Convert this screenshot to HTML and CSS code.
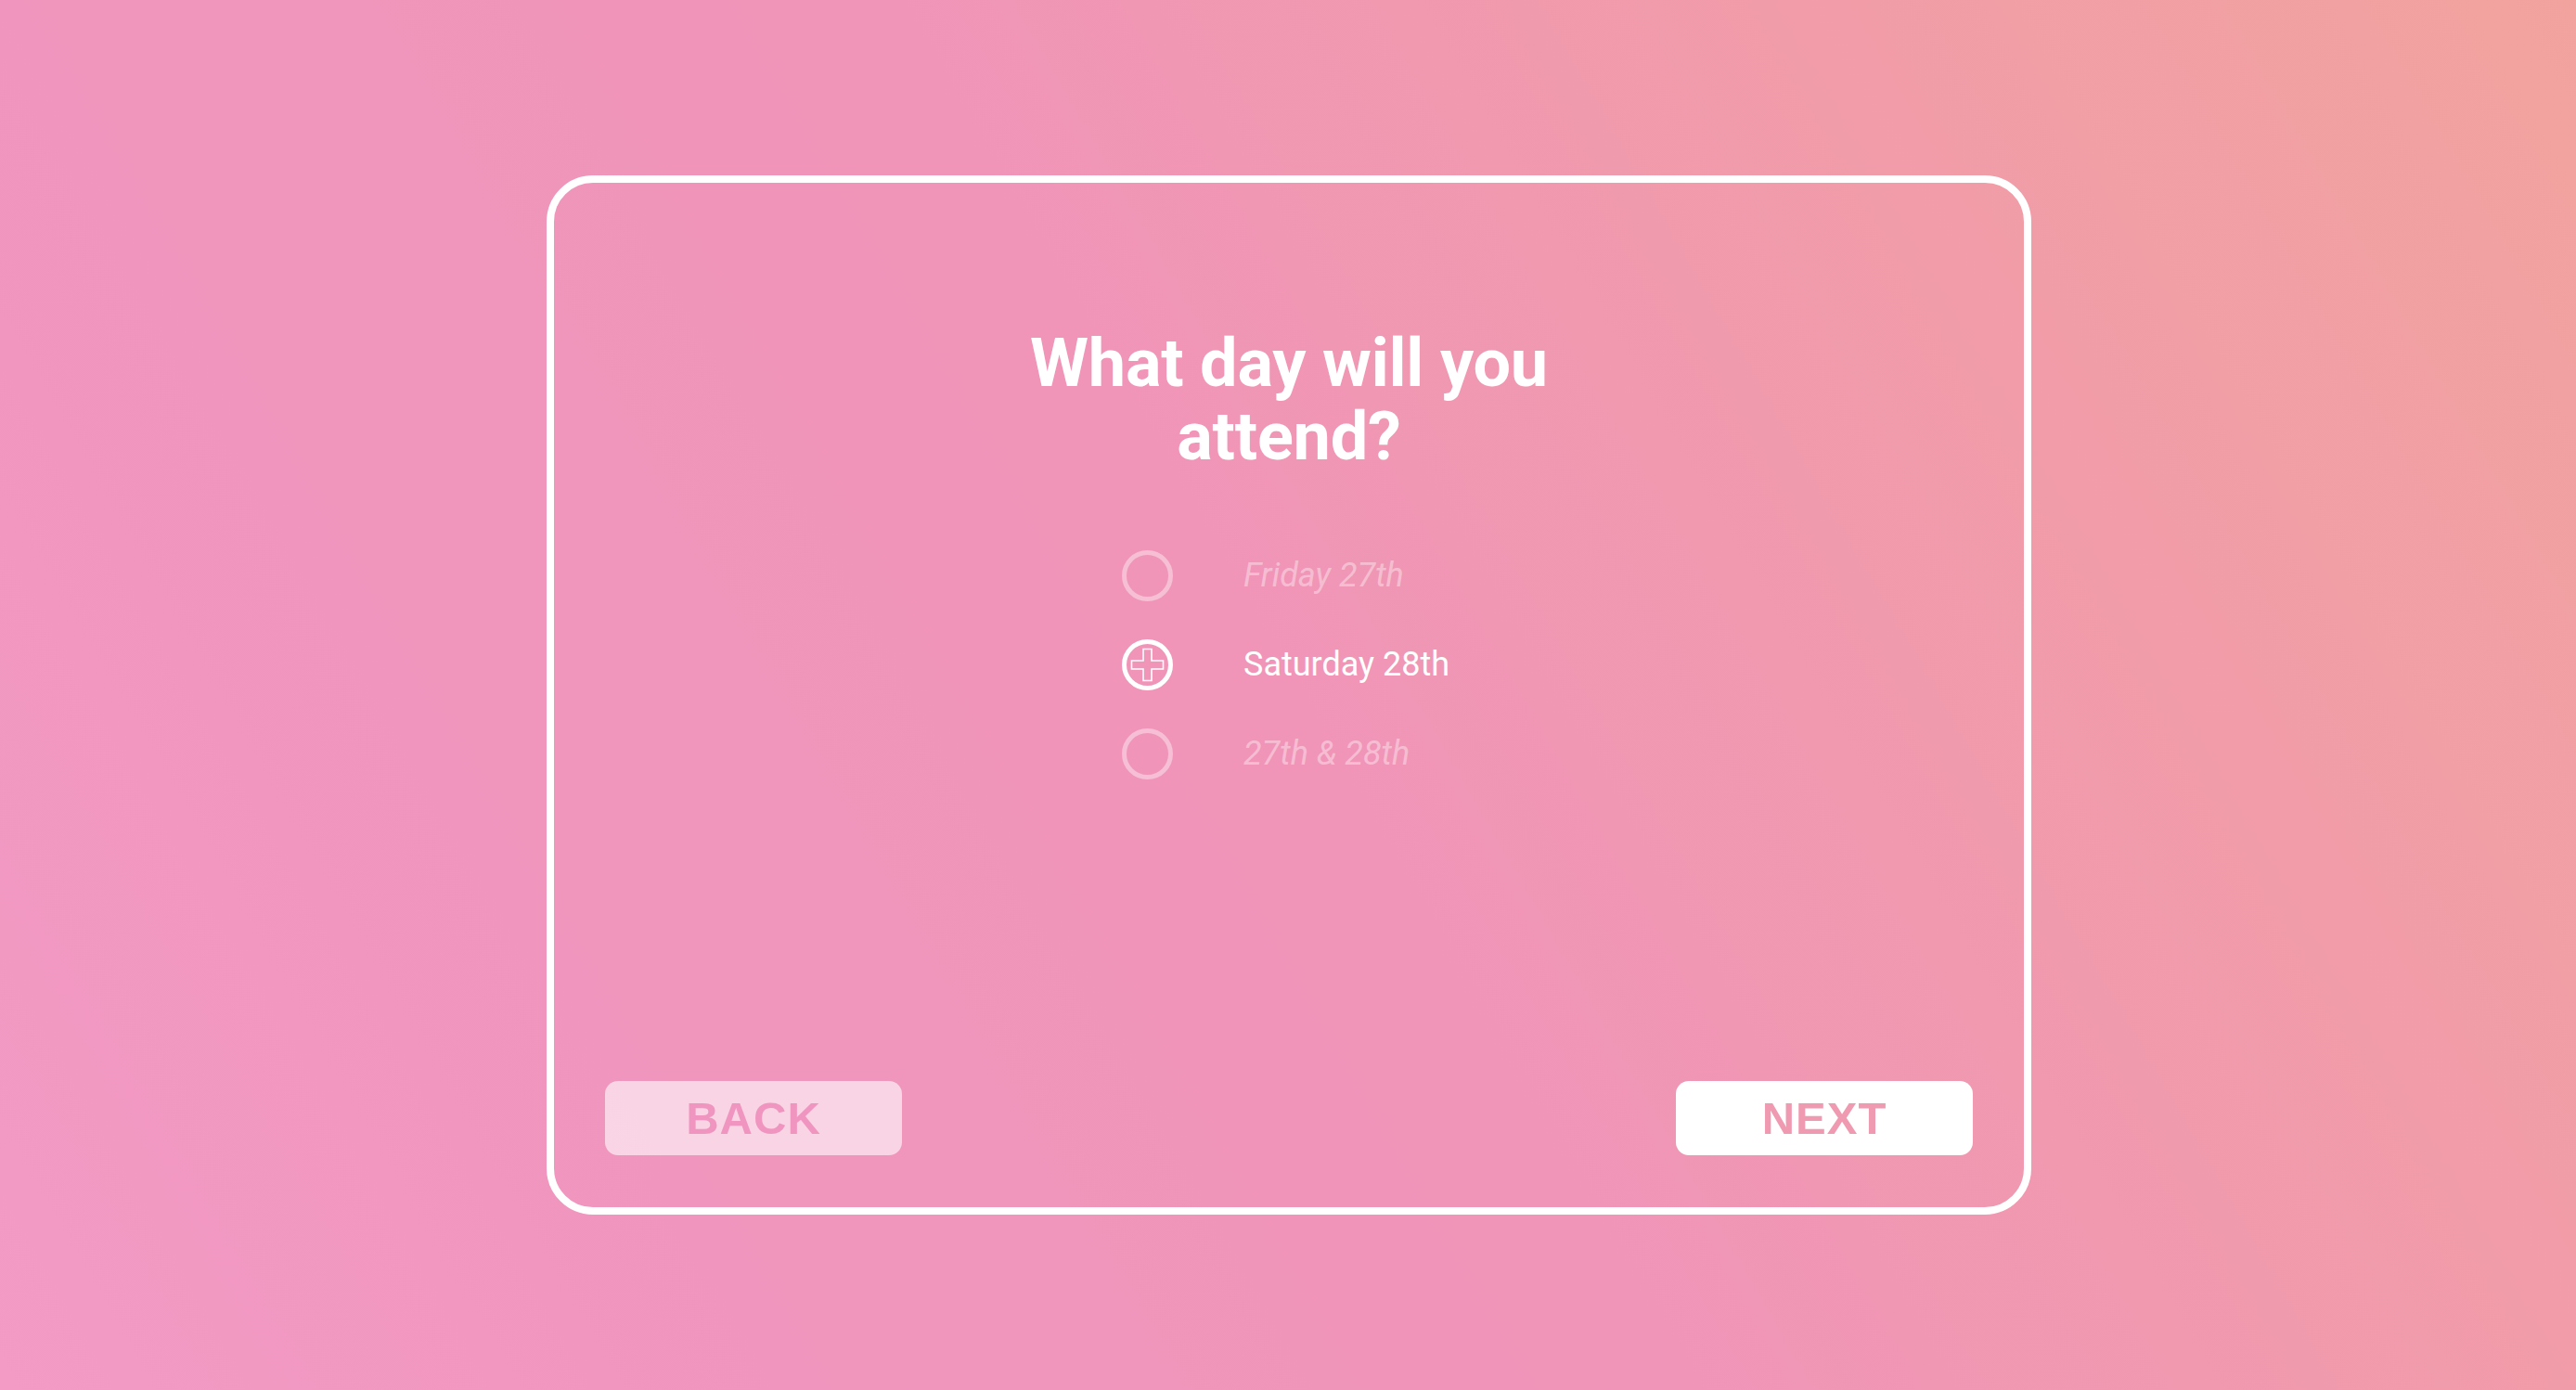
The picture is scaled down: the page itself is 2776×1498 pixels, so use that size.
FILE: index.html
```html
<!DOCTYPE html>
<html lang="en">
<head>
<meta charset="utf-8">
<title>What day will you attend?</title>
<link rel="stylesheet" href="styles.css">
</head>
<body>
<main class="card">
  <h1 class="title">What day will you attend?</h1>
  <ul class="options">
    <li class="option option--muted">
      <span class="radio"></span>
      <span class="label">Friday 27th</span>
    </li>
    <li class="option option--selected">
      <svg class="radio-icon" viewBox="0 0 55 55" width="55" height="55" aria-hidden="true">
        <circle cx="27.5" cy="27.5" r="25" fill="none" stroke="#ffffff" stroke-width="5"/>
        <path d="M23 10.5 H32 V23 H44.5 V32 H32 V44.5 H23 V32 H10.5 V23 H23 Z" fill="none" stroke="#ffffff" stroke-width="1.6" stroke-linejoin="miter"/>
      </svg>
      <span class="label">Saturday 28th</span>
    </li>
    <li class="option option--muted">
      <span class="radio"></span>
      <span class="label">27th &amp; 28th</span>
    </li>
  </ul>
  <div class="actions">
    <button class="btn btn--back" type="button">BACK</button>
    <button class="btn btn--next" type="button">NEXT</button>
  </div>
</main>
</body>
</html>
```
FILE: styles.css
```css
html, body {
  margin: 0;
  padding: 0;
  height: 100%;
}

body {
  min-height: 100vh;
  display: flex;
  align-items: center;
  justify-content: center;
  font-family: Roboto, "Noto Sans", "Liberation Sans", sans-serif;
  background: linear-gradient(60deg, #f39bc5 0%, #f095bd 24%, #f095b8 50%, #f19ca9 76%, #f2a39e 100%);
}

.card {
  box-sizing: border-box;
  width: 1600px;
  height: 1120px;
  margin-left: 2px;
  border: 8px solid #ffffff;
  border-radius: 50px;
  padding: 0 55px 56px;
  display: flex;
  flex-direction: column;
}

.title {
  margin: 155px auto 0;
  width: 640px;
  text-align: center;
  color: #ffffff;
  font-family: Roboto, sans-serif;
  font-weight: 700;
  font-size: 72px;
  line-height: 79px;
  letter-spacing: -0.2px;
}

.options {
  list-style: none;
  margin: 62px auto 0;
  padding: 0;
  width: 360px;
}

.option {
  height: 96px;
  display: flex;
  align-items: center;
  gap: 76px;
}

.radio {
  box-sizing: border-box;
  flex: none;
  width: 55px;
  height: 55px;
  border: 5px solid rgba(255, 255, 255, 0.4);
  border-radius: 50%;
}

.radio-icon {
  flex: none;
  display: block;
}

.label {
  font-family: Roboto, sans-serif;
  font-size: 36px;
  color: #ffffff;
  white-space: nowrap;
}

.option--muted .label {
  font-style: italic;
  color: rgba(255, 255, 255, 0.4);
}

.actions {
  margin-top: auto;
  display: flex;
  justify-content: space-between;
}

.btn {
  width: 320px;
  height: 80px;
  border: none;
  border-radius: 14px;
  padding: 0;
  font-family: "Liberation Sans", Arial, sans-serif;
  font-weight: 700;
  font-size: 49px;
  line-height: 80px;
  letter-spacing: 1px;
  text-align: center;
  cursor: pointer;
}

.btn--back {
  background: rgba(255, 255, 255, 0.6);
  color: #f095bf;
}

.btn--next {
  background: #ffffff;
  color: #f09ab1;
}
```
